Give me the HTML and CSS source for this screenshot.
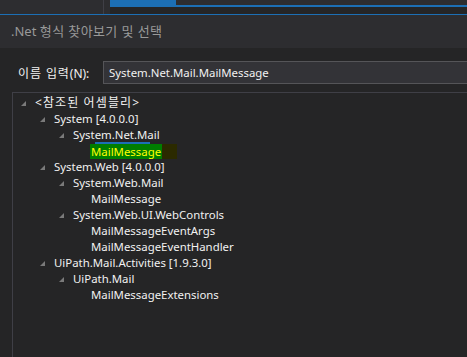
FILE: index.html
```html
<!DOCTYPE html>
<html lang="ko">
<head>
    <meta charset="UTF-8">
    <title>.Net 형식 찾아보기 및 선택</title>
    <link rel="stylesheet" href="styles.css">
</head>
<body>
    <div class="top-strip">
        <div class="strip-left"></div>
        <div class="strip-right">
            <div class="strip-tab"></div>
        </div>
    </div>

    <div class="title-bar">.Net <span class="ko">형식 찾아보기 및 선택</span></div>

    <div class="search-row">
        <label for="typeName"><span class="ko">이름 입력</span>(N):</label>
        <input type="text" id="typeName" value="System.Net.Mail.MailMessage">
    </div>

    <div class="tree">
        <div class="node lvl0"><span class="arrow"></span><span class="ko">&lt;참조된 어셈블리&gt;</span></div>
        <div class="node lvl1"><span class="arrow"></span>System [4.0.0.0]</div>
        <div class="node lvl2"><span class="arrow"></span>System.Net.Mail</div>
        <div class="node lvl3"><span class="hit">MailMessage</span><span class="hit-tail"></span><span class="hit-mark"></span></div>
        <div class="node lvl1"><span class="arrow"></span>System.Web [4.0.0.0]</div>
        <div class="node lvl2"><span class="arrow"></span>System.Web.Mail</div>
        <div class="node lvl3">MailMessage</div>
        <div class="node lvl2"><span class="arrow"></span>System.Web.UI.WebControls</div>
        <div class="node lvl3">MailMessageEventArgs</div>
        <div class="node lvl3">MailMessageEventHandler</div>
        <div class="node lvl1"><span class="arrow"></span>UiPath.Mail.Activities [1.9.3.0]</div>
        <div class="node lvl2"><span class="arrow"></span>UiPath.Mail</div>
        <div class="node lvl3">MailMessageExtensions</div>
    </div>
</body>
</html>
```

FILE: styles.css
```css
body {
    margin: 0;
    width: 467px;
    height: 357px;
    overflow: hidden;
    display: flex;
    flex-direction: column;
    background-color: #252526;
    color: #f1f1f1;
    font-family: "Noto Sans", "Noto Sans CJK KR", sans-serif;
    font-size: 11.4px;
}

/* Korean glyphs run wider in the original font */
.ko {
    letter-spacing: 0.9px;
}

/* bit of the editor window above the dialog */
.top-strip {
    display: flex;
    flex: none;
    height: 14px;
    background-color: #2d2d30;
    border-bottom: 1px solid #1c6fb5;
}

.strip-left {
    width: 103px;
    border-right: 1px solid #3f3f46;
}

.strip-right {
    flex: 1;
    margin-left: 6px;
    background: linear-gradient(#2d2d30 0 5px, #1c6fb5 5px 7px, #252526 7px);
}

.strip-tab {
    width: 66px;
    height: 6px;
    background-color: #1c6fb5;
}

.title-bar {
    flex: none;
    height: 33px;
    line-height: 33px;
    padding-left: 11px;
    background-color: #2d2d30;
    color: #999999;
    font-size: 13px;
}

.title-bar .ko {
    letter-spacing: 0.4px;
}

.search-row {
    display: flex;
    flex: none;
    align-items: center;
    margin-top: 13px;
    padding-left: 18px;
}

.search-row label {
    width: 85px;
    font-size: 12px;
}

.search-row input {
    flex: 1;
    height: 23px;
    box-sizing: border-box;
    margin: 0;
    padding: 0 0 0 5px;
    border: 1px solid #555558;
    border-right: none;
    background-color: #333337;
    color: #f1f1f1;
    font-family: inherit;
    font-size: 11.4px;
    outline: none;
}

.tree {
    flex: 1;
    margin: 8px 0 0 12px;
    padding-top: 2px;
    border-top: 1px solid #3f3f46;
    border-left: 1px solid #3f3f46;
}

.node {
    position: relative;
    height: 16px;
    line-height: 16px;
    white-space: nowrap;
    display: flex;
    align-items: center;
}

.node .ko {
    font-size: 12px;
    letter-spacing: 1.1px;
}

.lvl0 { padding-left: 8px; }
.lvl1 { padding-left: 27px; }
.lvl2 { padding-left: 46px; }
.lvl3 { padding-left: 78px; }

.arrow {
    width: 0;
    height: 0;
    border-left: 5px solid transparent;
    border-bottom: 5px solid #7a7a7a;
    margin-right: 9px;
    margin-top: 1px;
}

.hit {
    background-color: #007d00;
    color: #ffff00;
    height: 15px;
    line-height: 15px;
    padding: 0 1px;
    margin-left: -1px;
}

.hit-tail {
    width: 15px;
    height: 15px;
    background-color: #2b2a00;
}

.hit-mark {
    position: absolute;
    left: 82px;
    top: -1px;
    width: 55px;
    height: 2px;
    background-color: #1c6fb5;
}
```
